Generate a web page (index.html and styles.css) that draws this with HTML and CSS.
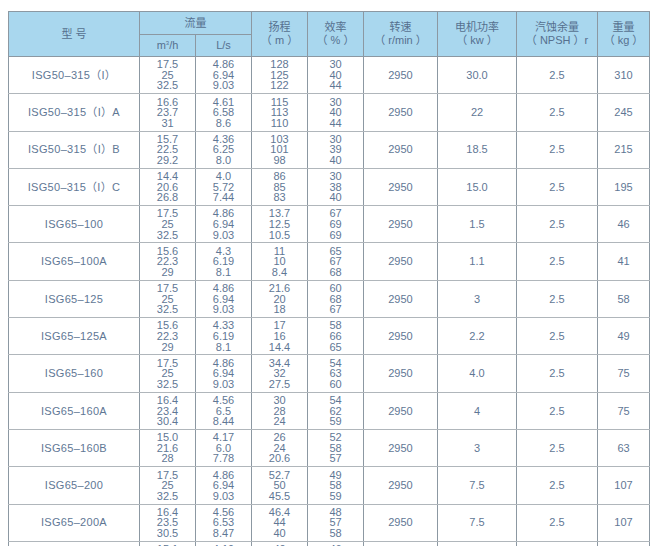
FILE: index.html
```html
<!DOCTYPE html>
<html lang="zh">
<head>
<meta charset="utf-8">
<link rel="stylesheet" href="styles.css">
</head>
<body>
<table class="spec">
<colgroup>
<col class="c-model"><col class="c-n"><col class="c-n"><col class="c-n"><col class="c-n"><col class="c-speed"><col class="c-power"><col class="c-npsh"><col class="c-kg">
</colgroup>
<thead>
<tr class="h1">
<th rowspan="2">型 号</th>
<th colspan="2">流量</th>
<th rowspan="2">扬程<br>（ m ）</th>
<th rowspan="2">效率<br>（ % ）</th>
<th rowspan="2">转速<br>（ r/min ）</th>
<th rowspan="2">电机功率<br>（ kw ）</th>
<th rowspan="2">汽蚀余量<br>（ NPSH ）r</th>
<th rowspan="2">重量<br>（ kg ）</th>
</tr>
<tr class="h2">
<th>m<sup>3</sup>/h</th>
<th>L/s</th>
</tr>
</thead>
<tbody>
<tr><td class="model">ISG50–315（I）</td><td>17.5<br>25<br>32.5</td><td>4.86<br>6.94<br>9.03</td><td>128<br>125<br>122</td><td>30<br>40<br>44</td><td>2950</td><td>30.0</td><td>2.5</td><td>310</td></tr>
<tr><td class="model">ISG50–315（I）A</td><td>16.6<br>23.7<br>31</td><td>4.61<br>6.58<br>8.6</td><td>115<br>113<br>110</td><td>30<br>40<br>44</td><td>2950</td><td>22</td><td>2.5</td><td>245</td></tr>
<tr><td class="model">ISG50–315（I）B</td><td>15.7<br>22.5<br>29.2</td><td>4.36<br>6.25<br>8.0</td><td>103<br>101<br>98</td><td>30<br>39<br>40</td><td>2950</td><td>18.5</td><td>2.5</td><td>215</td></tr>
<tr><td class="model">ISG50–315（I）C</td><td>14.4<br>20.6<br>26.8</td><td>4.0<br>5.72<br>7.44</td><td>86<br>85<br>83</td><td>30<br>38<br>40</td><td>2950</td><td>15.0</td><td>2.5</td><td>195</td></tr>
<tr><td class="model">ISG65–100</td><td>17.5<br>25<br>32.5</td><td>4.86<br>6.94<br>9.03</td><td>13.7<br>12.5<br>10.5</td><td>67<br>69<br>69</td><td>2950</td><td>1.5</td><td>2.5</td><td>46</td></tr>
<tr><td class="model">ISG65–100A</td><td>15.6<br>22.3<br>29</td><td>4.3<br>6.19<br>8.1</td><td>11<br>10<br>8.4</td><td>65<br>67<br>68</td><td>2950</td><td>1.1</td><td>2.5</td><td>41</td></tr>
<tr><td class="model">ISG65–125</td><td>17.5<br>25<br>32.5</td><td>4.86<br>6.94<br>9.03</td><td>21.6<br>20<br>18</td><td>60<br>68<br>67</td><td>2950</td><td>3</td><td>2.5</td><td>58</td></tr>
<tr><td class="model">ISG65–125A</td><td>15.6<br>22.3<br>29</td><td>4.33<br>6.19<br>8.1</td><td>17<br>16<br>14.4</td><td>58<br>66<br>65</td><td>2950</td><td>2.2</td><td>2.5</td><td>49</td></tr>
<tr><td class="model">ISG65–160</td><td>17.5<br>25<br>32.5</td><td>4.86<br>6.94<br>9.03</td><td>34.4<br>32<br>27.5</td><td>54<br>63<br>60</td><td>2950</td><td>4.0</td><td>2.5</td><td>75</td></tr>
<tr><td class="model">ISG65–160A</td><td>16.4<br>23.4<br>30.4</td><td>4.56<br>6.5<br>8.44</td><td>30<br>28<br>24</td><td>54<br>62<br>59</td><td>2950</td><td>4</td><td>2.5</td><td>75</td></tr>
<tr><td class="model">ISG65–160B</td><td>15.0<br>21.6<br>28</td><td>4.17<br>6.0<br>7.78</td><td>26<br>24<br>20.6</td><td>52<br>58<br>57</td><td>2950</td><td>3</td><td>2.5</td><td>63</td></tr>
<tr><td class="model">ISG65–200</td><td>17.5<br>25<br>32.5</td><td>4.86<br>6.94<br>9.03</td><td>52.7<br>50<br>45.5</td><td>49<br>58<br>59</td><td>2950</td><td>7.5</td><td>2.5</td><td>107</td></tr>
<tr><td class="model">ISG65–200A</td><td>16.4<br>23.5<br>30.5</td><td>4.56<br>6.53<br>8.47</td><td>46.4<br>44<br>40</td><td>48<br>57<br>58</td><td>2950</td><td>7.5</td><td>2.5</td><td>107</td></tr>
<tr><td class="model">ISG65–200B</td><td>15.1<br>21.7<br>28.2</td><td>4.19<br>6.03<br>7.83</td><td>40<br>37<br>33</td><td>46<br>55<br>56</td><td>2950</td><td>5.5</td><td>2.5</td><td>100</td></tr>
</tbody>
</table>
</body>
</html>
```
FILE: styles.css
```css
html, body {
  margin: 0;
  padding: 0;
  background: #ffffff;
}
body {
  padding: 11px 8px 0 8px;
  font-family: "Liberation Sans", Arial, "Noto Sans CJK SC", sans-serif;
  color: #5f7795;
}
.spec {
  border-collapse: collapse;
  table-layout: fixed;
  width: 641px;
  font-size: 11px;
}
.c-model { width: 131px; }
.c-n { width: 56px; }
.c-speed { width: 74px; }
.c-power { width: 79px; }
.c-npsh { width: 81px; }
.c-kg { width: 52px; }

.spec th,
.spec td {
  border: 1px solid #8c98a2;
  text-align: center;
  vertical-align: middle;
  padding: 0;
}
.spec th {
  background: #a9d7ee;
  font-weight: normal;
  color: #56708e;
  line-height: 13px;
  font-size: 11px;
}
.h1 th { height: 22px; }
.h2 th { height: 21px; }
.spec sup {
  font-size: 6px;
  vertical-align: 4px;
  line-height: 0;
}
.spec td {
  height: 36.3px;
  line-height: 10.6px;
  border-top-color: #b0b6bb;
  border-bottom-color: #b0b6bb;
}
.spec td.model {
  letter-spacing: 0.3px;
}
```
